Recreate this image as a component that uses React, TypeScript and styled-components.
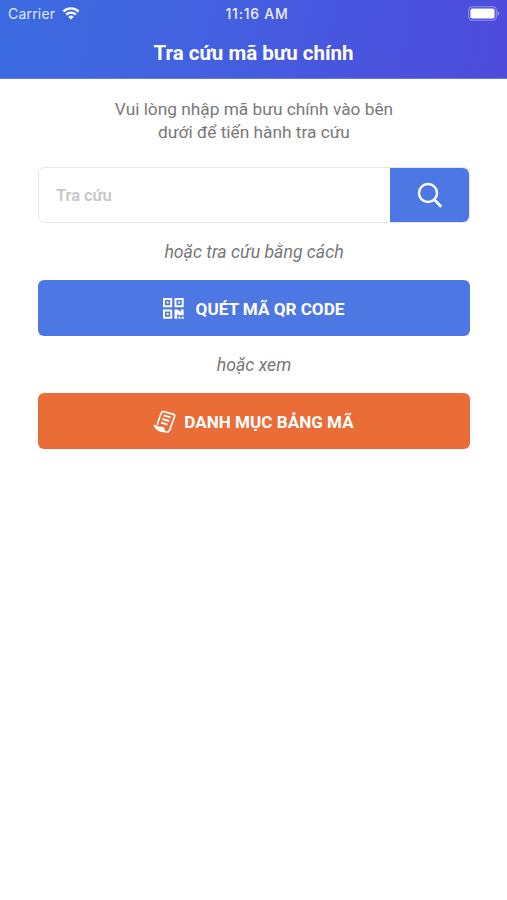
import React from "react";
import styled, { createGlobalStyle } from "styled-components";

const GlobalStyle = createGlobalStyle`
  *, *::before, *::after { box-sizing: border-box; }
  body {
    margin: 0;
    background: #fff;
    font-family: Roboto, sans-serif;
  }
`;

const Screen = styled.div`
  min-height: 900px;
  display: flex;
  flex-direction: column;
  background: #fff;
`;

const Header = styled.header`
  height: 79px;
  color: #fff;
  background: linear-gradient(100deg, #3b6be0 0%, #4361e0 40%, #4855df 68%, #4f4bdc 100%);
  border-bottom: 1px solid #6a79dc;
`;

const StatusBar = styled.div`
  display: grid;
  grid-template-columns: 1fr auto 1fr;
  align-items: center;
  height: 27px;
  padding: 0 7px 0 8px;
  font-family: Inter, sans-serif;
  font-size: 14px;
`;

const Carrier = styled.div`
  display: flex;
  align-items: center;
  gap: 7px;
  letter-spacing: 0.2px;
  color: #e1e8ff;
`;

const Clock = styled.time`
  font-weight: 500;
  font-size: 14px;
  letter-spacing: 0.75px;
  color: #edf0ff;
  padding-left: 6px;
`;

const BatterySlot = styled.div`
  display: flex;
  justify-content: flex-end;
`;

const Title = styled.h1`
  margin: 0;
  padding-top: 13px;
  text-align: center;
  font-size: 20.5px;
  line-height: 26px;
  font-weight: 700;
`;

const Main = styled.main`
  display: flex;
  flex-direction: column;
  padding: 19px 37px 0 38px;
`;

const Intro = styled.p`
  margin: 0 0 24px;
  text-align: center;
  font-size: 17.3px;
  line-height: 22.5px;
  color: #797979;
`;

const SearchBar = styled.form`
  display: flex;
  height: 56px;
  border: 1px solid #e6e6e8;
  border-radius: 7px;
  overflow: hidden;
`;

const SearchInput = styled.input`
  flex: 1;
  min-width: 0;
  border: 0;
  outline: 0;
  padding: 0 17px;
  background: transparent;
  font: 600 16.6px Roboto, sans-serif;
  letter-spacing: -0.1px;
  color: #555;
  &::placeholder { color: #c8c8ca; opacity: 1; }
`;

const SearchButton = styled.button`
  display: flex;
  align-items: center;
  justify-content: center;
  width: 79px;
  border: 0;
  padding: 0;
  background: #4d77e3;
`;

const Hint = styled.p`
  margin: 0;
  height: 57px;
  line-height: 58px;
  text-align: center;
  font-size: 17.7px;
  font-style: italic;
  color: #777;
`;

const ActionButton = styled.button<{ $color: string; $gap: number }>`
  display: flex;
  align-items: center;
  justify-content: center;
  gap: ${({ $gap }) => $gap}px;
  height: 56px;
  border: 0;
  border-radius: 6px;
  padding: 1px 1px 0 0;
  background: ${({ $color }) => $color};
  color: #fff;
  font: 700 17.1px Roboto, sans-serif;
`;

const WifiIcon = () => (
  <svg width="18" height="13" viewBox="0 0 17 13" fill="none" stroke="#fff" strokeWidth="2.3">
    <path d="M.9 4.6a10.8 10.8 0 0 1 15.2 0" />
    <path d="M3.7 7.6a6.8 6.8 0 0 1 9.6 0" />
    <path d="M8.5 12.5 5.9 9.9a3.7 3.7 0 0 1 5.2 0Z" fill="#fff" stroke="none" />
  </svg>
);

const BatteryIcon = () => (
  <svg width="32" height="15" viewBox="0 0 32 15">
    <rect x=".7" y=".7" width="27.6" height="13.6" rx="3.6" fill="none" stroke="#8f91ec" strokeWidth="1.1" />
    <rect x="2.4" y="2.4" width="24.2" height="10.2" rx="2" fill="#fff" />
    <path d="M29.6 5.2q1.6.8 1.6 2.3t-1.6 2.3Z" fill="#a7a9f0" />
  </svg>
);

const SearchIcon = () => (
  <svg width="26" height="27" viewBox="0 0 26 27" fill="none" stroke="#fff">
    <circle cx="11" cy="11" r="9" strokeWidth="2.4" />
    <path d="m17.5 17.8 6.7 7" strokeWidth="2.8" />
  </svg>
);

const QrIcon = () => (
  <svg width="21" height="21" viewBox="0 0 21 21" fill="#fff">
    <path d="M1 1h7.2v7.2H1ZM12.5 1h7.2v7.2h-7.2ZM1 12.5h7.2v7.2H1Z" fill="none" stroke="#fff" strokeWidth="2" />
    <path d="M3.6 3.6h2v2h-2ZM15.1 3.6h2v2h-2ZM3.6 15.1h2v2h-2Z" />
    <path d="M11.5 11.5h3.2l3 2.5v-2.5h3v5.7h-5l-1.5-1.5v5h-2.7ZM15.5 18.7h2v2h-2ZM18.7 18.7h2v2h-2Z" />
  </svg>
);

const ScrollIcon = () => (
  <svg width="23" height="24" viewBox="0 0 23 24" fill="none" stroke="#fff" strokeLinecap="round" strokeLinejoin="round">
    <path d="M4.3 14.2 8.2 3Q8.9 1.1 10.8 1.6l9.3 2.5q2 .6 1.4 2.5l-4.6 12.9q-1 3-3.9 2.5" strokeWidth="1.7" />
    <path d="M1 15.2q4.7 2.3 9.6 2.4-.1 3.7 2.4 4.4Q3.2 21.3 1 15.2Z" fill="#fff" strokeWidth="1.2" />
    <path d="m10.6 5.4 6.9 2M9.3 9l6.9 2M8 12.6l6.5 1.9" strokeWidth="1.9" strokeLinecap="butt" />
  </svg>
);

export default function App() {
  return (
    <Screen>
      <GlobalStyle />
      <Header>
        <StatusBar>
          <Carrier>Carrier <WifiIcon /></Carrier>
          <Clock>11:16 AM</Clock>
          <BatterySlot><BatteryIcon /></BatterySlot>
        </StatusBar>
        <Title>Tra cứu mã bưu chính</Title>
      </Header>
      <Main>
        <Intro>
          Vui lòng nhập mã bưu chính vào bên<br />
          dưới để tiến hành tra cứu
        </Intro>
        <SearchBar onSubmit={(event) => event.preventDefault()}>
          <SearchInput placeholder="Tra cứu" aria-label="Tra cứu" />
          <SearchButton type="submit" aria-label="Tra cứu"><SearchIcon /></SearchButton>
        </SearchBar>
        <Hint>hoặc tra cứu bằng cách</Hint>
        <ActionButton $color="#4d77e3" $gap={12}><QrIcon />QUÉT MÃ QR CODE</ActionButton>
        <Hint>hoặc xem</Hint>
        <ActionButton $color="#ea6c37" $gap={8}><ScrollIcon />DANH MỤC BẢNG MÃ</ActionButton>
      </Main>
    </Screen>
  );
}
